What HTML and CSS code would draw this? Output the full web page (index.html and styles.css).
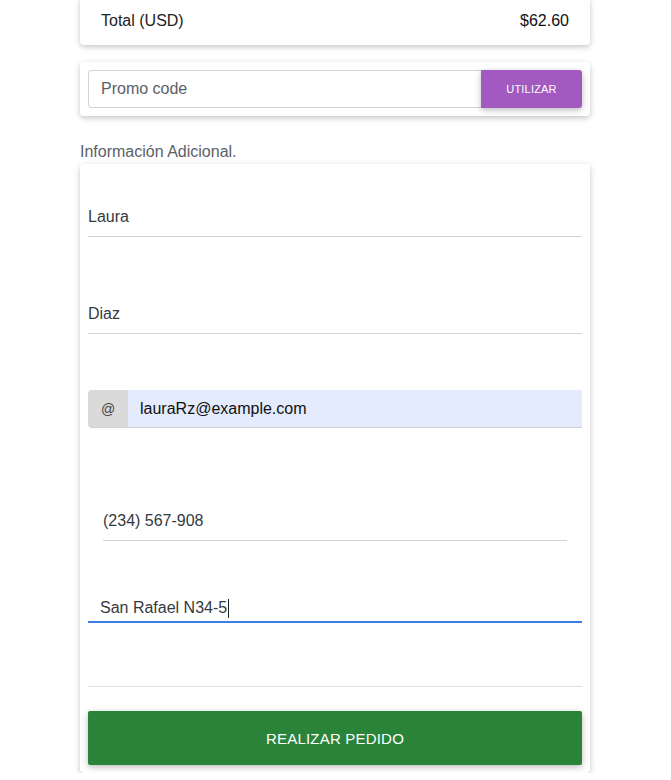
FILE: index.html
```html
<!DOCTYPE html>
<html lang="es">
<head>
<meta charset="utf-8">
<title>Checkout</title>
<link rel="stylesheet" href="styles.css">
</head>
<body>
<div class="page">
  <div class="card total-card">
    <div class="total-row"><span>Total (USD)</span><strong>$62.60</strong></div>
  </div>

  <div class="card promo-card">
    <div class="promo-group">
      <input class="promo-input" type="text" placeholder="Promo code">
      <button class="promo-btn" type="button">UTILIZAR</button>
    </div>
  </div>

  <p class="section-label">Información Adicional.</p>

  <div class="card form-card">
    <div class="field field-first"><input class="line-input" type="text" value="Laura"></div>
    <div class="field"><input class="line-input" type="text" value="Diaz"></div>
    <div class="input-group">
      <span class="prepend">@</span>
      <input class="email-input" type="email" value="lauraRz@example.com">
    </div>
    <div class="field field-indent"><input class="line-input" type="text" value="(234) 567-908"></div>
    <div class="field field-address"><span class="addr-input">San Rafael N34-5<span class="caret"></span></span></div>
    <hr class="divider">
    <button class="submit-btn" type="button">REALIZAR PEDIDO</button>
  </div>
</div>
</body>
</html>
```

FILE: styles.css
```css
* { box-sizing: border-box; }
html, body { margin: 0; padding: 0; background: #fff; }
body { font-family: "Liberation Sans", Arial, sans-serif; font-size: 16px; color: #333; }

.page { width: 510px; margin: -3px 0 0 80px; }

.card {
  background: #fff;
  border-radius: 4px;
  box-shadow: 0 2px 5px rgba(0,0,0,0.16), 0 2px 10px rgba(0,0,0,0.08);
}

.total-card { padding: 12px 21px 13px 21px; }
.total-row { display: flex; justify-content: space-between; line-height: 23px; color: #222; }
.total-row strong { font-weight: normal; color: #111; }

.promo-card { margin-top: 17px; padding: 8px; }
.promo-group { display: flex; height: 38px; }
.promo-input {
  flex: 1; min-width: 0; height: 38px; border: 1px solid #ced4da; border-right: 0;
  border-radius: 4px 0 0 4px; padding: 0 12px; font: inherit; color: #495057; outline: none;
}
.promo-input::placeholder { color: #5b6167; }
.promo-btn {
  width: 101px; height: 38px; border: 0; border-radius: 0 3px 3px 0; background: #a259c0;
  color: #fff; font: inherit; font-size: 11px; letter-spacing: 0.2px;
  box-shadow: 0 2px 5px rgba(0,0,0,0.16), 0 2px 10px rgba(0,0,0,0.12);
}

.section-label { margin: 0; padding: 27px 0 3px; font-size: 16px; line-height: 18px; color: #5b6167; }

.form-card { padding: 8px 8px 8px; }

.field { margin-top: 58px; }
.field-first { margin-top: 26px; }
.line-input {
  display: block; width: 100%; height: 39px; border: 0; border-bottom: 1px solid #ced4da;
  padding: 0; font: inherit; color: #353a40; background: transparent; outline: none;
}

.input-group { display: flex; height: 38px; margin-top: 56px; }
.prepend {
  width: 40px; display: flex; align-items: center; justify-content: center;
  background: #dadada; border-radius: 4px 0 0 4px; border-bottom: 1px solid #ced4da;
  font-size: 14px; color: #444;
}
.email-input {
  flex: 1; min-width: 0; height: 38px; border: 0; border-bottom: 1px solid #ced4da;
  padding: 0 12px; font: inherit; color: #111; background: #e3ebfc; outline: none;
}

.field-indent { margin-top: 74px; padding: 0 15px; }

.field-address { margin-top: 43px; }
.addr-input {
  display: flex; align-items: center; height: 39px; padding: 11px 12px 0;
  border-bottom: 2px solid #3d7ee3; color: #353a40;
}
.caret { display: inline-block; width: 1px; height: 19px; background: #222; margin-left: 1px; }

.divider { border: 0; border-top: 1px solid #e0e0e0; margin: 63px 0 0; }

.submit-btn {
  display: block; width: 100%; height: 54px; margin-top: 24px; border: 0; border-radius: 2px;
  background: #29843a; color: #fff; font: inherit; font-size: 15px; letter-spacing: 0.2px;
  box-shadow: 0 2px 5px rgba(0,0,0,0.16), 0 2px 10px rgba(0,0,0,0.12);
}
```
